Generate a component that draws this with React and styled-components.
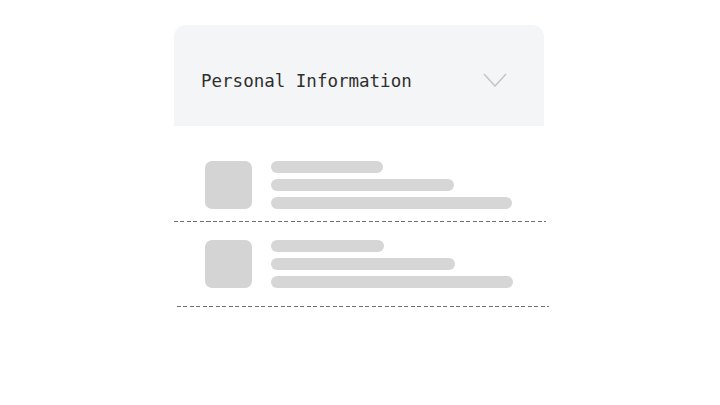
import React from "react";
import styled, { createGlobalStyle } from "styled-components";

const Global = createGlobalStyle`
  html, body { margin: 0; padding: 0; background: #ffffff; }
`;

const Page = styled.div`
  width: 720px;
  height: 405px;
  padding-top: 25px;
  box-sizing: border-box;
  display: flex;
  justify-content: center;
`;

const Card = styled.div`
  width: 370px;
  margin-left: -2px;
  display: flex;
  flex-direction: column;
`;

const Header = styled.div`
  height: 101px;
  box-sizing: border-box;
  background: #f4f5f6;
  border-radius: 12px 12px 0 0;
  padding: 46px 37px 0 27px;
  display: flex;
  justify-content: space-between;
  align-items: flex-start;
`;

const Title = styled.span`
  font-family: "DejaVu Sans Mono", "Liberation Mono", monospace;
  font-size: 17.5px;
  line-height: 20px;
  color: #2f2f2f;
  letter-spacing: 0;
`;

const Chevron = styled.svg`
  margin-top: 2px;
  display: block;
`;

const Row = styled.div`
  display: flex;
  gap: 19px;
  padding: ${(p) => p.$top}px 0 ${(p) => p.$bottom}px ${(p) => p.$left}px;
`;

const Thumb = styled.div`
  width: 47px;
  height: 48px;
  border-radius: 7px;
  background: #d4d4d4;
  flex: none;
`;

const Lines = styled.div`
  display: flex;
  flex-direction: column;
  gap: 6px;
`;

const Bar = styled.div`
  height: 12px;
  width: ${(p) => p.$w}px;
  border-radius: 6px;
  background: #d6d6d6;
`;

const Divider = styled.div`
  height: 1.2px;
  width: 372px;
  margin-left: ${(p) => p.$shift || 0}px;
  background: repeating-linear-gradient(
    to right,
    #6f6f6f 0,
    #6f6f6f 4px,
    transparent 4px,
    transparent 6.5px
  );
`;

const rows = [
  { top: 35, bottom: 12, left: 31, shift: 0, widths: [112, 183, 241] },
  { top: 18, bottom: 18, left: 31, shift: 3, widths: [113, 184, 242] },
];

export default function App() {
  return (
    <>
      <Global />
      <Page>
        <Card>
          <Header>
            <Title>Personal Information</Title>
            <Chevron width="24" height="14" viewBox="0 0 24 14" fill="none">
              <polyline
                points="1,1 12,13 23,1"
                stroke="#c6c6c6"
                strokeWidth="1.6"
                strokeLinejoin="miter"
              />
            </Chevron>
          </Header>
          {rows.map((r, i) => (
            <React.Fragment key={i}>
              <Row $top={r.top} $bottom={r.bottom} $left={r.left}>
                <Thumb />
                <Lines>
                  {r.widths.map((w, j) => (
                    <Bar key={j} $w={w} />
                  ))}
                </Lines>
              </Row>
              <Divider $shift={r.shift} />
            </React.Fragment>
          ))}
        </Card>
      </Page>
    </>
  );
}
